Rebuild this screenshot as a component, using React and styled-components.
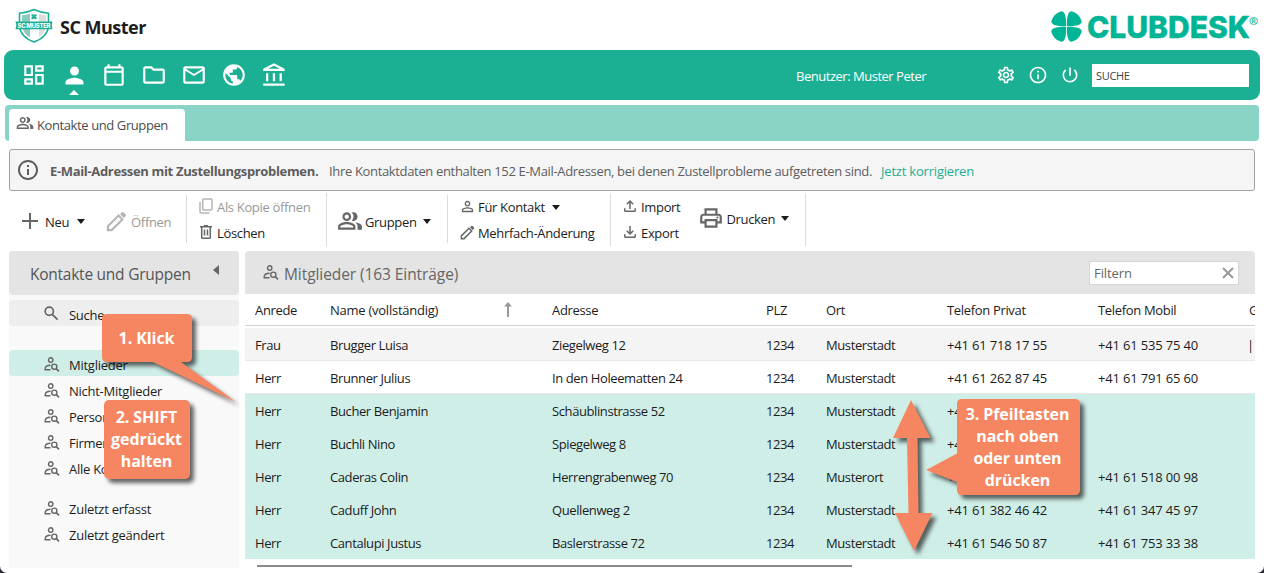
import styled, { createGlobalStyle, css } from "styled-components"
import {
    MdOutlineDashboard,
    MdPerson,
    MdOutlineFolder,
    MdMailOutline,
    MdPublic,
    MdOutlineAccountBalance,
    MdOutlineSettings,
    MdInfoOutline,
    MdPowerSettingsNew,
    MdOutlinePeopleAlt,
    MdPersonOutline,
    MdOutlineFileUpload,
    MdOutlineFileDownload,
    MdOutlinePrint
} from "react-icons/md"

const green = "#1baf94";
const orange = "#f58661";
const selected = "#d0eee8";

const members = [
    ["Frau", "Brugger Luisa", "Ziegelweg 12", "1234", "Musterstadt", "+41 61 718 17 55", "+41 61 535 75 40", "|"],
    ["Herr", "Brunner Julius", "In den Holeematten 24", "1234", "Musterstadt", "+41 61 262 87 45", "+41 61 791 65 60", ""],
    ["Herr", "Bucher Benjamin", "Schäublinstrasse 52", "1234", "Musterstadt", "+41 61 301 22 18", "", ""],
    ["Herr", "Buchli Nino", "Spiegelweg 8", "1234", "Musterstadt", "+41 61 422 19 70", "", ""],
    ["Herr", "Caderas Colin", "Herrengrabenweg 70", "1234", "Musterort", "+41 61 518 00 97", "+41 61 518 00 98", ""],
    ["Herr", "Caduff John", "Quellenweg 2", "1234", "Musterstadt", "+41 61 382 46 42", "+41 61 347 45 97", ""],
    ["Herr", "Cantalupi Justus", "Baslerstrasse 72", "1234", "Musterstadt", "+41 61 546 50 87", "+41 61 753 33 38", ""],
];

function CalendarIcon() {
    return (
        <svg width="26" height="26" viewBox="0 0 24 24" fill="currentColor">
            <path fillRule="evenodd" d="M5 22q-.82 0-1.41-.59Q3 20.820 3 20V6q0-.82.59-1.410Q4.180 4 5 4h1V2h2v2h8V2h2v2h1q.82 0 1.410.59Q21 5.180 21 6v14q0 .82-.59 1.410Q19.820 22 19 22Zm0-2h14V10H5Zm0-12h14V6H5Z" />
        </svg>
    )
}

function PencilIcon({ size }) {
    return (
        <svg width={size} height={size} viewBox="0 0 22 22" fill="none" stroke="currentColor" strokeWidth="2.200">
            <path d="M2 20v-4L13.200 4.800l4 4L6 20Z" />
            <path d="M14.700 3.300 16.500 1.500q1-1 2 0l2 2q1 1 0 2L18.700 7.300Z" fill="currentColor" stroke="none" />
        </svg>
    )
}

function PersonSearchIcon() {
    return (
        <svg width="16" height="15" viewBox="0 0 16 15" fill="none" stroke="currentColor" strokeWidth="1.400">
            <circle cx="6.700" cy="3" r="2.200" />
            <path d="M6.500 12.800H1.200v-1.300Q1.500 8.500 6.500 8.300" />
            <circle cx="10.300" cy="9.700" r="2.600" />
            <path d="M12.200 11.600 15 14.400" strokeWidth="1.600" />
        </svg>
    )
}

function SearchIcon() {
    return (
        <svg width="15" height="15" viewBox="0 0 15 15" fill="none" stroke="currentColor" strokeWidth="1.700">
            <circle cx="5.300" cy="5.300" r="4.100" />
            <path d="M8.300 8.300 13.600 13.600" />
        </svg>
    )
}

function CopyIcon() {
    return (
        <svg width="14" height="16" viewBox="0 0 14 16" fill="none" stroke="currentColor" strokeWidth="1.500">
            <rect x="3.700" y="1" width="9.300" height="11" rx="1" />
            <path d="M1 4v10q0 1 1 1h8.500" />
        </svg>
    )
}

function TrashIcon() {
    return (
        <svg width="12" height="14" viewBox="0 0 12 14" fill="none" stroke="currentColor" strokeWidth="1.500">
            <path d="M0 1.700h12M4 .8h4M1.700 2v10.300q0 1 1 1h6.600q1 0 1-1V2M4.500 4.500v6M7.500 4.500v6" />
        </svg>
    )
}

function ShieldLogo() {
    return (
        <svg width="38" height="36" viewBox="0 0 38 36">
            <path d="M19 1.500Q12 4.800 4.500 5.300V18Q5.500 29 19 34Q32.500 29 33.500 18V5.300Q26 4.800 19 1.500Z" fill="#fff" stroke={green} strokeWidth="1.600" />
            <path d="M15 5.500Q11 7 7 7.300V18Q7.500 25 15 29.500Z" fill="#8bcbbd" />
            <path d="M24 5.800Q27 7 31 7.300V18Q30.500 25 24 29Z" fill="#dedede" />
            <path d="M16.500 6.300h2l.5 1.500 .5-1.500h2v2l-1.500.5 1.500.5v2h-2l-.5-1.500-.5 1.500h-2v-2l1.500-.5-1.500-.5Z" fill={green} />
            <path d="M.5 13.500h37l-.8 3.700.8 4H.5l.8-4Z" fill={green} />
            <text x="19" y="19.600" textAnchor="middle" textLength="33" fill="#fff" fontFamily="Inter, sans-serif" fontWeight="800" fontSize="6" letterSpacing="0">SC MUSTER</text>
        </svg>
    )
}

function Clover() {
    return (
        <svg width="31" height="31" viewBox="0 0 31 31" fill="#00b496">
            {[0, 90, 180, 270].map(angle => (
                <path key={angle} transform={`rotate(${angle} 15.500 15.500)`} d="M15.100 15.100Q15.400 6.500 13.400 2.300Q11.600-.8 8.600 1Q3 3 1 8.600Q-.8 11.600 2.300 13.400Q6.500 15.400 15.100 15.100Z" />
            ))}
        </svg>
    )
}

function Annotations() {
    return (
        <Overlay>
            <svg width="1264" height="573" fill={orange}>
                <path d="M107 314h80q5 0 5 5v38q0 5-5 5h-6L236 402 153 362h-46q-5 0-5-5v-38q0-5 5-5Z" />
                <rect x="104" y="400" width="86" height="79" rx="5" />
                <path d="M911 400 930.500 438H917.500L918.500 513H932.500L914 551 895 513H908.500L907 438H893Z" />
                <path d="M962 399h113q5 0 5 5v86q0 5-5 5H962q-5 0-5-5v-8L926 470 957 453.500V404q0-5 5-5Z" />
            </svg>
            <Callout $x={102} $y={327} $w={89}>1. Klick</Callout>
            <Callout $x={104} $y={406} $w={85}>2. SHIFT<br />gedrückt<br />halten</Callout>
            <Callout $x={957} $y={403} $w={121}>3. Pfeiltasten<br />nach oben<br />oder unten<br />drücken</Callout>
        </Overlay>
    )
}

function SideEntry({ label, icon, active, search }) {
    return (
        <SideItem $active={active} $search={search}>
            {icon || <PersonSearchIcon />}
            <span>{label}</span>
        </SideItem>
    )
}

export default function App() {
    return (
        <Page>
            <GlobalStyle />
            <Header>
                <Club>
                    <ShieldLogo />
                    <h1>SC Muster</h1>
                </Club>
                <Brand>
                    <Clover />
                    <svg width="170" height="31">
                        <BrandText x="-1" y="26.800" textLength="163" lengthAdjust="spacingAndGlyphs">CLUBDESK</BrandText>
                        <BrandMark x="161" y="13.500">®</BrandMark>
                    </svg>
                </Brand>
            </Header>

            <NavBar>
                <NavButton><MdOutlineDashboard size={26} /></NavButton>
                <NavButton $active><MdPerson size={27} /></NavButton>
                <NavButton><CalendarIcon /></NavButton>
                <NavButton><MdOutlineFolder size={26} /></NavButton>
                <NavButton><MdMailOutline size={26} /></NavButton>
                <NavButton><MdPublic size={26} /></NavButton>
                <NavButton><MdOutlineAccountBalance size={27} /></NavButton>
                <User>Benutzer: Muster Peter</User>
                <Tools>
                    <MdOutlineSettings size={20} />
                    <MdInfoOutline size={20} />
                    <MdPowerSettingsNew size={20} />
                </Tools>
                <SearchBox>SUCHE</SearchBox>
            </NavBar>

            <TabBar>
                <Tab>
                    <MdOutlinePeopleAlt size={18} />
                    <span>Kontakte und Gruppen</span>
                </Tab>
            </TabBar>

            <Notice>
                <MdInfoOutline size={24} />
                <b>E-Mail-Adressen mit Zustellungsproblemen.</b>
                <span>Ihre Kontaktdaten enthalten 152 E-Mail-Adressen, bei denen Zustellprobleme aufgetreten sind.</span>
                <a>Jetzt korrigieren</a>
            </Notice>

            <Toolbar>
                <Group $width={178} $short>
                    <Action $left={13} $gap={7} $low>
                        <svg width="16" height="16" viewBox="0 0 16 16" stroke="currentColor" strokeWidth="2"><path d="M8 0v16M0 8h16" /></svg>
                        <span>Neu</span>
                        <Caret $left={1} />
                    </Action>
                    <Action $left={21} $gap={4} $disabled $low>
                        <PencilIcon size={21} />
                        <span>Öffnen</span>
                    </Action>
                </Group>
                <Group $width={140}>
                    <Stack $left={12}>
                        <Action $gap={4} $disabled><CopyIcon /><span>Als Kopie öffnen</span></Action>
                        <Action $gap={5} $indent={1}><TrashIcon /><span>Löschen</span></Action>
                    </Stack>
                </Group>
                <Group $width={121} $short>
                    <Action $left={10} $gap={2} $low>
                        <MdOutlinePeopleAlt size={26} />
                        <span>Gruppen</span>
                        <Caret $left={4} />
                    </Action>
                </Group>
                <Group $width={163}>
                    <Stack $left={11}>
                        <Action $gap={2}><MdPersonOutline size={17} /><span>Für Kontakt</span><Caret $left={5} /></Action>
                        <Action $gap={3} $indent={1}><PencilIcon size={15} /><span>Mehrfach-Änderung</span></Action>
                    </Stack>
                </Group>
                <Group $width={195}>
                    <Stack $left={10}>
                        <Action $gap={2}><MdOutlineFileUpload size={18} /><span>Import</span></Action>
                        <Action $gap={2}><MdOutlineFileDownload size={18} /><span>Export</span></Action>
                    </Stack>
                    <Action $left={18} $gap={2} $raised $low>
                        <MdOutlinePrint size={26} />
                        <span>Drucken</span>
                        <Caret $left={4} />
                    </Action>
                </Group>
            </Toolbar>

            <Content>
                <Sidebar>
                    <SideTitle>
                        <span>Kontakte und Gruppen</span>
                        <svg width="6" height="10"><path d="M6 0v10L0 5Z" fill="#666" /></svg>
                    </SideTitle>
                    <SideEntry label="Suche" icon={<SearchIcon />} search />
                    <Gap $height={24} />
                    <SideEntry label="Mitglieder" active />
                    <SideEntry label="Nicht-Mitglieder" />
                    <SideEntry label="Personen" />
                    <SideEntry label="Firmen" />
                    <SideEntry label="Alle Kontakte" />
                    <Gap $height={14} />
                    <SideEntry label="Zuletzt erfasst" />
                    <SideEntry label="Zuletzt geändert" />
                </Sidebar>

                <Main>
                    <MainTitle>
                        <PersonSearchIcon />
                        <span>Mitglieder (163 Einträge)</span>
                        <Filter>
                            Filtern
                            <svg width="12" height="12" stroke="currentColor" strokeWidth="2"><path d="M1 1 11 11M11 1 1 11" /></svg>
                        </Filter>
                    </MainTitle>
                    <HeadRow>
                        <span>Anrede</span>
                        <NameHead>
                            Name (vollständig)
                            <svg width="8" height="15" fill="currentColor"><path d="M4 0 8 4.500H5V15H3V4.500H0Z" /></svg>
                        </NameHead>
                        <span>Adresse</span>
                        <span>PLZ</span>
                        <span>Ort</span>
                        <span>Telefon Privat</span>
                        <span>Telefon Mobil</span>
                        <span>G</span>
                    </HeadRow>
                    {members.map((row, i) => (
                        <Row key={i} $hover={i === 0} $selected={i > 1}>
                            {row.map((cell, j) => <Cell key={j} $phone={j > 4}>{cell}</Cell>)}
                        </Row>
                    ))}
                    <ScrollThumb />
                </Main>
            </Content>
            <Annotations />
        </Page>
    )
}

const GlobalStyle = createGlobalStyle`
    * {
        box-sizing: border-box;
    }
    body {
        margin: 0;
        background: #2a2a35;
        font-family: "Open Sans", "Noto Sans", sans-serif;
        font-size: 13px;
        letter-spacing: -0.33px;
        color: #1c1c1c;
    }
    span, b, a {
        white-space: nowrap;
    }
    svg {
        flex: none;
        display: block;
    }
`;

const Page = styled.div`
    position: relative;
    width: 1264px;
    height: 573px;
    overflow: hidden;
    background: #fff;
    border-radius: 0 0 7px 7px;
`;

const Header = styled.header`
    height: 50px;
    display: flex;
    justify-content: space-between;
    padding: 8px 6px 0 15px;
`;

const Club = styled.div`
    display: flex;
    gap: 7px;

    h1 {
        margin: 0;
        font-size: 18px;
        line-height: 39px;
        font-weight: 700;
        letter-spacing: -0.5px;
    }
`;

const Brand = styled.div`
    display: flex;
    gap: 6px;
    padding-top: 3px;

    svg {
        overflow: visible;
    }
`;

const BrandText = styled.text`
    font: 800 30.5px Inter, sans-serif;
    letter-spacing: 0;
    fill: #00b496;
    stroke: #00b496;
    stroke-width: 0.4px;
`;

const BrandMark = styled.text`
    font: 700 11px "Open Sans", sans-serif;
    letter-spacing: 0;
    fill: #00b496;
`;

const NavBar = styled.nav`
    height: 50px;
    margin: 0 4px;
    padding-left: 10px;
    display: flex;
    align-items: center;
    background: ${green};
    border-radius: 9px;
    color: #fff;
`;

const NavButton = styled.div`
    position: relative;
    width: 40px;
    display: flex;
    justify-content: center;

    ${({ $active }) => $active && css`
        &::after {
            content: "";
            position: absolute;
            top: 28px;
            left: 15px;
            border: 5px solid transparent;
            border-top: 0;
            border-bottom-color: #fff;
        }
    `}
`;

const User = styled.span`
    margin-left: 502px;
    width: 200px;
    padding-top: 2px;
    letter-spacing: -0.48px;
`;

const Tools = styled.div`
    display: flex;
    gap: 12px;
    width: 96px;
`;

const SearchBox = styled.div`
    width: 157px;
    height: 23px;
    padding-left: 4px;
    background: #fff;
    color: #444;
    font-size: 11px;
    line-height: 24px;
`;

const TabBar = styled.div`
    height: 36px;
    margin: 5px 5px 0;
    padding: 4px 4px 0;
    background: #8ad4c5;
    border-radius: 4px;
`;

const Tab = styled.div`
    width: 176px;
    height: 32px;
    padding-left: 7px;
    display: flex;
    gap: 3px;
    background: #fff;
    color: #4b4b4b;
    border-radius: 4px 4px 0 0;
    line-height: 33px;
    letter-spacing: -0.4px;

    svg {
        margin-top: 5px;
        color: #666;
    }
`;

const Notice = styled.div`
    height: 42px;
    margin: 8px 9px 0;
    padding-left: 6px;
    display: flex;
    align-items: center;
    border: 1px solid #a2a2a2;
    border-radius: 3px;
    background: #f5f5f5;
    color: #5d5d5d;

    b {
        margin-left: 10px;
        width: 279px;
        padding-top: 2px;
        letter-spacing: -0.34px;
    }
    span {
        width: 552px;
        padding-top: 2px;
        letter-spacing: -0.34px;
    }
    a {
        color: ${green};
        padding-top: 2px;
        letter-spacing: -0.2px;
    }
`;

const Toolbar = styled.div`
    height: 60px;
    padding: 3px 9px 7px;
    display: flex;
    align-items: center;
`;

const Group = styled.div`
    display: flex;
    align-items: center;
    width: ${({ $width }) => $width}px;
    height: ${({ $short }) => $short ? 48 : 53}px;
    border-right: 1px solid #dcdcdc;
`;

const Stack = styled.div`
    display: flex;
    flex-direction: column;
    gap: 8px;
    margin-left: ${({ $left }) => $left}px;
`;

const Action = styled.div`
    display: flex;
    align-items: center;
    height: 18px;
    gap: ${({ $gap }) => $gap}px;
    margin-left: ${({ $left = 0 }) => $left}px;
    padding-left: ${({ $indent = 0 }) => $indent}px;
    margin-bottom: ${({ $raised }) => $raised ? 5 : 0}px;
    color: ${({ $disabled }) => $disabled ? "#999" : "#1c1c1c"};

    svg {
        color: ${({ $disabled }) => $disabled ? "#b5b5b5" : "#666"};
        margin-top: ${({ $low, $raised }) => $raised ? 2 : $low ? 4 : 0}px;
    }
    span {
        padding-top: ${({ $low }) => $low ? 5 : 2}px;
    }
    i {
        margin-top: ${({ $low }) => $low ? 4 : 2}px;
    }
`;

const Caret = styled.i`
    margin-left: ${({ $left }) => $left}px;
    border: 4px solid transparent;
    border-top: 5px solid #1c1c1c;
    border-bottom: 0;
`;

const Content = styled.div`
    display: flex;
    gap: 6px;
    padding: 0 9px;
`;

const Sidebar = styled.aside`
    width: 230px;
    height: 317px;
    background: #f9f9f9;
`;

const SideTitle = styled.div`
    height: 44px;
    margin-bottom: 5px;
    padding: 2px 20px 0 21px;
    display: flex;
    justify-content: space-between;
    align-items: center;
    background: #e4e4e4;
    border-radius: 4px;
    color: #555;
    font-size: 15.5px;
    letter-spacing: -0.25px;

    svg {
        margin-bottom: 8px;
    }
`;

const Gap = styled.div`
    height: ${({ $height }) => $height}px;
`;

const SideItem = styled.div`
    height: 26px;
    padding-left: 35px;
    display: grid;
    grid-template-columns: 25px 1fr;
    align-items: center;
    border-radius: 4px;
    background: ${({ $active, $search }) => $active ? selected : $search ? "#eee" : "transparent"};
    letter-spacing: -0.26px;

    svg {
        color: #666;
        margin-top: ${({ $search }) => $search ? 0 : 2}px;
    }
    span {
        padding-top: 3px;
    }
`;

const Main = styled.main`
    width: 1010px;
    overflow: hidden;
`;

const MainTitle = styled.div`
    height: 43px;
    padding: 0 16px 0 18px;
    display: flex;
    align-items: center;
    gap: 5px;
    background: #e4e4e4;
    border-radius: 4px 4px 0 0;
    color: #666;
    font-size: 15.5px;
    letter-spacing: -0.08px;

    span {
        padding-top: 2px;
    }
`;

const Filter = styled.div`
    width: 150px;
    height: 24px;
    margin-left: auto;
    padding: 0 4px;
    display: flex;
    justify-content: space-between;
    align-items: center;
    border: 1px solid #d5d5d5;
    background: #fff;
    font-size: 13px;
    line-height: 24px;

    svg {
        color: #999;
    }
`;

const columns = css`
    display: grid;
    grid-template-columns: 75px 222px 214px 60px 121px 151px 151px 20px;
    padding-left: 10px;
    width: 1026px;
    align-items: center;
`;

const HeadRow = styled.div`
    ${columns}
    height: 32px;
    margin-bottom: 2px;
    border-bottom: 1px solid #d3d3d3;
`;

const NameHead = styled.span`
    display: flex;
    justify-content: space-between;
    align-items: center;
    padding-right: 40px;
    letter-spacing: -0.25px;

    svg {
        color: #999;
    }
`;

const Row = styled.div`
    ${columns}
    height: 33px;
    padding-top: 2px;
    border-bottom: 1px solid ${({ $selected }) => $selected ? selected : "#e8e8e8"};
    background: ${({ $hover, $selected }) => $selected ? selected : $hover ? "#f4f4f4" : "#fff"};
`;

const Cell = styled.span`
    letter-spacing: ${({ $phone }) => $phone ? -0.17 : -0.4}px;

    &:last-child {
        margin-left: -2px;
    }
`;

const ScrollThumb = styled.div`
    width: 595px;
    height: 2px;
    margin: 6px 0 0 12px;
    background: #8b8b8b;
`;

const Overlay = styled.div`
    position: absolute;
    inset: 0;

    > svg {
        filter: drop-shadow(4px 4px 2px rgba(0, 0, 0, 0.6));
    }
`;

const Callout = styled.div`
    position: absolute;
    left: ${({ $x }) => $x}px;
    top: ${({ $y }) => $y}px;
    width: ${({ $w }) => $w}px;
    color: #fff;
    font-size: 16px;
    font-weight: 700;
    line-height: 22px;
    letter-spacing: -0.08px;
    text-align: center;
`;
